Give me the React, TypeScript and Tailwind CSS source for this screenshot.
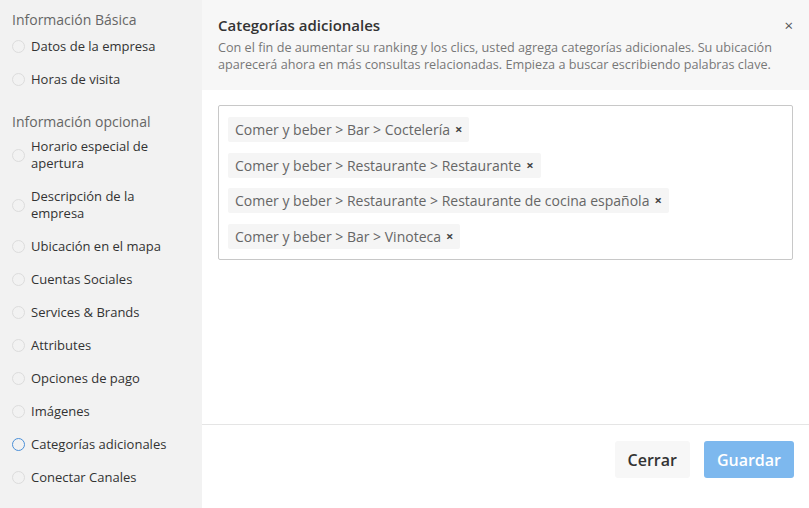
import React from 'react';

type NavItem = { label: string; active?: boolean };

const basic: NavItem[] = [{ label: 'Datos de la empresa' }, { label: 'Horas de visita' }];

const optional: NavItem[] = [
  { label: 'Horario especial de apertura' },
  { label: 'Descripción de la empresa' },
  { label: 'Ubicación en el mapa' },
  { label: 'Cuentas Sociales' },
  { label: 'Services & Brands' },
  { label: 'Attributes' },
  { label: 'Opciones de pago' },
  { label: 'Imágenes' },
  { label: 'Categorías adicionales', active: true },
  { label: 'Conectar Canales' },
];

const tags = [
  'Comer y beber > Bar > Coctelería',
  'Comer y beber > Restaurante > Restaurante',
  'Comer y beber > Restaurante > Restaurante de cocina española',
  'Comer y beber > Bar > Vinoteca',
];

const NavRow: React.FC<{ item: NavItem }> = ({ item }) => (
  <div className="flex items-center py-[8px] pr-4">
    <span
      className={
        item.active
          ? 'w-[13px] h-[13px] rounded-full border-[1.5px] border-[#4a8fd8] shrink-0'
          : 'w-[13px] h-[13px] rounded-full border border-[#dcdcdc] shrink-0'
      }
    />
    <span className="ml-[6px] text-[13px] leading-[17px] text-[#333]">{item.label}</span>
  </div>
);

const App: React.FC = () => {
  return (
    <div
      className="flex w-[809px] h-[508px] overflow-hidden bg-white"
      style={{ fontFamily: '"Open Sans", "Noto Sans", sans-serif' }}
    >
      <aside className="w-[202px] shrink-0 bg-[#f2f2f2] pl-3 pt-[10px]">
        <h3 className="text-[14px] leading-[20px] text-[#666]">Información Básica</h3>
        <div className="-mt-[0.5px]">
          {basic.map((item) => (
            <NavRow key={item.label} item={item} />
          ))}
        </div>
        <h3 className="mt-[16px] text-[14px] leading-[20px] text-[#666]">Información opcional</h3>
        <div className="-mt-[1.5px]">
          {optional.map((item) => (
            <NavRow key={item.label} item={item} />
          ))}
        </div>
      </aside>

      <main className="flex-1 flex flex-col">
        <header className="bg-[#f7f7f7] px-4 pt-[14px] h-[90px] relative">
          <h2 className="text-[15px] leading-[22px] font-semibold text-[#333]">Categorías adicionales</h2>
          <button className="absolute right-[16px] top-[15px] text-[#555] text-[15px] leading-[20px]">×</button>
          <p className="mt-[3px] text-[12.65px] leading-[17px] text-[#777]">
            Con el fin de aumentar su ranking y los clics, usted agrega categorías adicionales. Su ubicación
            <br />
            aparecerá ahora en más consultas relacionadas. Empieza a buscar escribiendo palabras clave.
          </p>
        </header>

        <section className="flex-1 px-4 pt-[15px]">
          <div className="border border-[#c8c8c8] rounded-[2px] h-[155px] px-[9px] pt-[11px] flex flex-col items-start gap-[10.5px]">
            {tags.map((t) => (
              <span
                key={t}
                className="inline-flex items-center h-[25px] px-[7px] bg-[#f5f5f5] rounded-[2px] text-[14px] text-[#666]"
              >
                {t}
                <span className="ml-[5px] text-[#444] text-[13px] font-bold leading-none">×</span>
              </span>
            ))}
          </div>
        </section>

        <footer className="border-t border-[#e5e5e5] h-[84px] flex items-start justify-end gap-[14px] pt-4 pr-[15px]">
          <button className="h-[37px] px-[13px] bg-[#f7f7f7] rounded-[3px] text-[16px] font-semibold text-[#333]">
            Cerrar
          </button>
          <button className="h-[37px] px-[13px] bg-[#7db8ee] rounded-[3px] text-[16px] font-semibold text-white">
            Guardar
          </button>
        </footer>
      </main>
    </div>
  );
};

export default App;
